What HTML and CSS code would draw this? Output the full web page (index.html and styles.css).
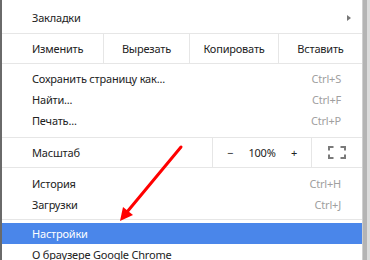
FILE: index.html
```html
<!DOCTYPE html>
<html lang="ru">
<head>
    <meta charset="UTF-8">
    <title>Меню Chrome</title>
    <link rel="stylesheet" href="styles.css">
</head>
<body>
    <div class="screen">
        <div class="menu">
            <div class="item">
                <span class="label">Закладки</span>
                <span class="submenu-arrow"></span>
            </div>
            <div class="separator separator-top"></div>

            <div class="button-row edit-row">
                <span class="row-label">Изменить</span>
                <span class="cell">Вырезать</span>
                <span class="cell">Копировать</span>
                <span class="cell">Вставить</span>
            </div>

            <div class="item item-first">
                <span class="label">Сохранить страницу как...</span>
                <span class="shortcut">Ctrl+S</span>
            </div>
            <div class="item">
                <span class="label">Найти...</span>
                <span class="shortcut">Ctrl+F</span>
            </div>
            <div class="item">
                <span class="label">Печать...</span>
                <span class="shortcut">Ctrl+P</span>
            </div>
            <div class="separator separator-mid"></div>

            <div class="button-row zoom-row">
                <span class="row-label">Масштаб</span>
                <span class="zoom-controls">
                    <span class="zoom-btn">&minus;</span>
                    <span class="zoom-value">100%</span>
                    <span class="zoom-btn">+</span>
                </span>
                <span class="fullscreen">
                    <svg width="18" height="13" viewBox="0 0 18 13">
                        <path d="M1 4.5V1h4.5M12.5 1H17v3.5M17 8.5V12h-4.5M5.5 12H1V8.5" fill="none" stroke="#7a7a7a" stroke-width="2"/>
                    </svg>
                </span>
            </div>

            <div class="item item-first item-after-zoom">
                <span class="label">История</span>
                <span class="shortcut">Ctrl+H</span>
            </div>
            <div class="item">
                <span class="label">Загрузки</span>
                <span class="shortcut">Ctrl+J</span>
            </div>
            <div class="separator separator-low"></div>

            <div class="item active">
                <span class="label">Настройки</span>
            </div>
            <div class="item">
                <span class="label">О браузере Google Chrome</span>
            </div>
        </div>
        <div class="window-edge"></div>

        <svg class="pointer" width="370" height="260" viewBox="0 0 370 260">
            <line x1="181" y1="147" x2="127" y2="212" stroke="#ff0000" stroke-width="3" stroke-linecap="round"/>
            <polygon points="120,221 123,207 133,215" fill="#ff0000"/>
        </svg>
    </div>
</body>
</html>
```

FILE: styles.css
```css
body {
    margin: 0;
    padding: 0;
    font-family: "Noto Sans", "Open Sans", sans-serif;
    font-size: 11px;
    letter-spacing: -0.2px;
    color: #222;
    background-color: #fff;
    overflow: hidden;
}

.screen {
    position: relative;
    display: flex;
    width: 370px;
    height: 260px;
    overflow: hidden;
}

.menu {
    width: 360px;
    padding-top: 7px;
    background-color: #fff;
    border-left: 2px solid #6a6a6a;
    border-right: 1px solid #cfcfcf;
}

.window-edge {
    flex: 1;
    background: linear-gradient(to right, #b4b4b4 0, #b4b4b4 4px, #dcdcdc 4px);
}

.item {
    display: flex;
    align-items: center;
    justify-content: space-between;
    height: 21px;
    padding: 0 21px 0 30px;
}

.item-first {
    margin-top: 4px;
}

.item-after-zoom {
    margin-top: 5px;
}

.item.active {
    background-color: #4a86ea;
    color: #fff;
}

.shortcut {
    color: #a0a0a0;
}

.submenu-arrow {
    width: 0;
    height: 0;
    margin-right: -10px;
    border-top: 3.5px solid transparent;
    border-bottom: 3.5px solid transparent;
    border-left: 4px solid #777;
}

.separator {
    height: 1px;
    background-color: #e6e6e6;
}

.separator-top {
    margin: 5px 0 0;
}

.separator-mid {
    margin: 6px 0 0;
}

.separator-low {
    margin: 4px 0 3px;
}

.button-row {
    display: flex;
    align-items: stretch;
    height: 29px;
    border-bottom: 1px solid #e6e6e6;
}

.row-label {
    display: flex;
    align-items: center;
    padding-left: 30px;
}

.edit-row .row-label {
    width: 71px;
    border-right: 1px solid #e6e6e6;
}

.edit-row .cell {
    display: flex;
    align-items: center;
    justify-content: center;
    width: 85px;
    border-right: 1px solid #e6e6e6;
}

.edit-row .cell:nth-child(3) {
    width: 88px;
}

.edit-row .cell:last-child {
    flex: 1;
    border-right: none;
}

.zoom-row .row-label {
    flex: 1;
}

.zoom-controls {
    display: flex;
    align-items: center;
    width: 98px;
    border-left: 1px solid #e6e6e6;
    border-right: 1px solid #e6e6e6;
}

.zoom-btn {
    width: 34px;
    text-align: center;
}

.zoom-value {
    width: 30px;
    text-align: center;
}

.fullscreen {
    display: flex;
    align-items: center;
    justify-content: center;
    width: 50px;
}

.pointer {
    position: absolute;
    top: 0;
    left: 0;
}
```
